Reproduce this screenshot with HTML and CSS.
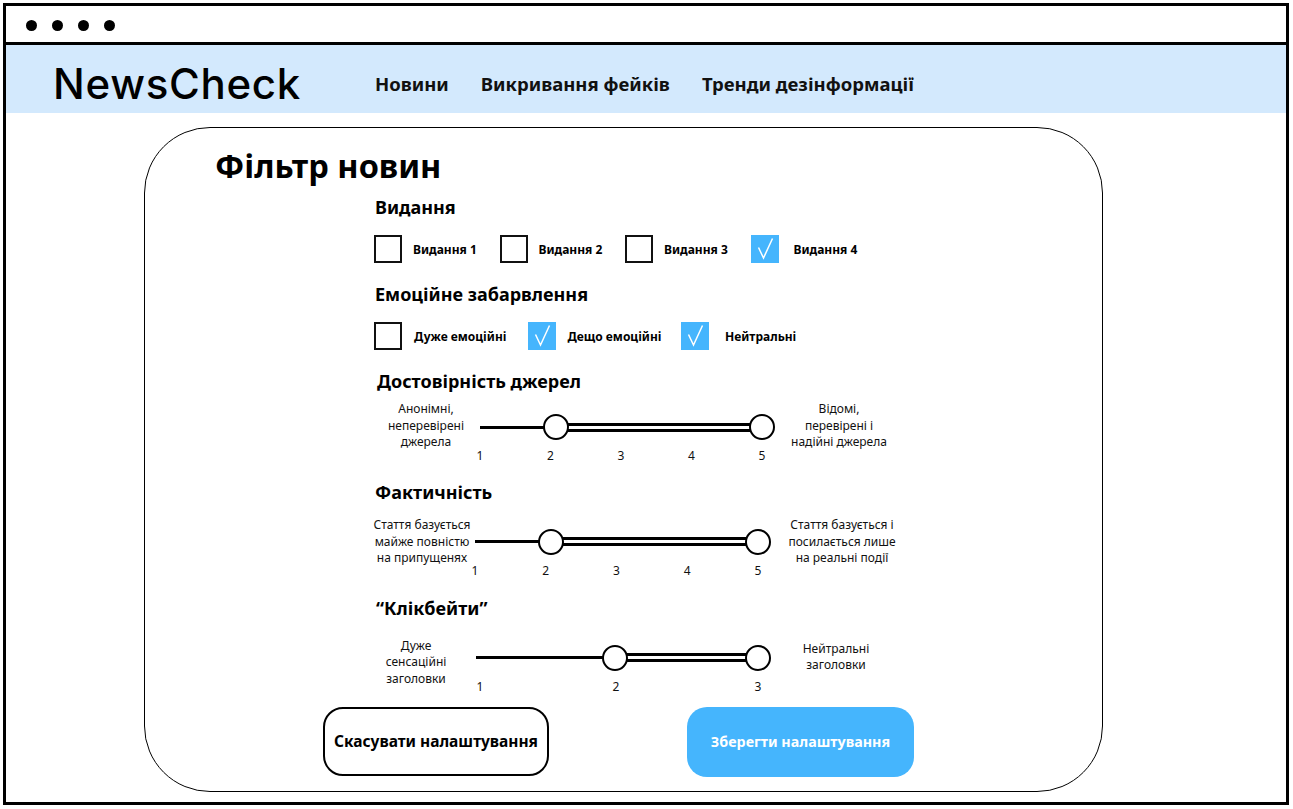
FILE: index.html
```html
<!DOCTYPE html>
<html lang="uk">
<head>
<meta charset="utf-8">
<title>NewsCheck — Фільтр новин</title>
<link rel="stylesheet" href="styles.css">
</head>
<body>
<div class="frame">
  <div class="topbar">
    <span class="dot"></span><span class="dot"></span><span class="dot"></span><span class="dot"></span>
  </div>
  <header class="nav">
    <div class="logo">NewsCheck</div>
    <nav class="links">
      <a href="#">Новини</a>
      <a href="#">Викривання фейків</a>
      <a href="#">Тренди дезінформації</a>
    </nav>
  </header>
  <main class="content">
    <section class="card">
      <h1 class="title">Фільтр новин</h1>
      <div class="form">
        <h2 class="h h-pub">Видання</h2>
        <div class="checks checks-pub">
          <label class="check"><span class="box"></span><span class="clabel">Видання 1</span></label>
          <label class="check"><span class="box"></span><span class="clabel">Видання 2</span></label>
          <label class="check"><span class="box"></span><span class="clabel">Видання 3</span></label>
          <label class="check"><span class="box on"><svg viewBox="0 0 28 28"><path d="M7.5 12.5 L12.5 23 L21.5 3.5"/></svg></span><span class="clabel gap4">Видання 4</span></label>
        </div>
        <h2 class="h h-emo">Емоційне забарвлення</h2>
        <div class="checks checks-emo">
          <label class="check"><span class="box"></span><span class="clabel">Дуже емоційні</span></label>
          <label class="check"><span class="box on"><svg viewBox="0 0 28 28"><path d="M7.5 12.5 L12.5 23 L21.5 3.5"/></svg></span><span class="clabel">Дещо емоційні</span></label>
          <label class="check"><span class="box on"><svg viewBox="0 0 28 28"><path d="M7.5 12.5 L12.5 23 L21.5 3.5"/></svg></span><span class="clabel gap3">Нейтральні</span></label>
        </div>

        <h2 class="h h-src">Достовірність джерел</h2>
        <div class="slider s1">
          <div class="side left">Анонімні,<br>неперевірені<br>джерела</div>
          <div class="trackcol">
            <div class="rail">
              <div class="line" style="width:76px"></div>
              <div class="range" style="left:76px;width:206px"></div>
              <span class="thumb" style="left:76px"></span>
              <span class="thumb" style="left:282px"></span>
            </div>
            <div class="ticks"><span>1</span><span>2</span><span>3</span><span>4</span><span>5</span></div>
          </div>
          <div class="side right">Відомі,<br>перевірені і<br>надійні джерела</div>
        </div>

        <h2 class="h h-fact">Фактичність</h2>
        <div class="slider s2">
          <div class="side left">Стаття базується<br>майже повністю<br>на припущенях</div>
          <div class="trackcol">
            <div class="rail">
              <div class="line" style="width:76px"></div>
              <div class="range" style="left:76px;width:207px"></div>
              <span class="thumb" style="left:76px"></span>
              <span class="thumb" style="left:283px"></span>
            </div>
            <div class="ticks"><span>1</span><span>2</span><span>3</span><span>4</span><span>5</span></div>
          </div>
          <div class="side right">Стаття базується і<br>посилається лише<br>на реальні події</div>
        </div>

        <h2 class="h h-click">“Клікбейти”</h2>
        <div class="slider s3">
          <div class="side left">Дуже<br>сенсаційні<br>заголовки</div>
          <div class="trackcol">
            <div class="rail">
              <div class="line" style="width:139px"></div>
              <div class="range" style="left:139px;width:143px"></div>
              <span class="thumb" style="left:139px"></span>
              <span class="thumb" style="left:282px"></span>
            </div>
            <div class="ticks t3"><span>1</span><span>2</span><span>3</span></div>
          </div>
          <div class="side right">Нейтральні<br>заголовки</div>
        </div>
      </div>
      <div class="buttons">
        <button class="btn cancel">Скасувати налаштування</button>
        <button class="btn save">Зберегти налаштування</button>
      </div>
    </section>
  </main>
</div>
</body>
</html>
```
FILE: styles.css
```css
* { box-sizing: border-box; }
html, body { margin: 0; padding: 0; background: #fff; }
body {
  font-family: "Noto Sans", "Open Sans", sans-serif;
  color: #000;
  padding: 3px 0 0 3px;
}
.frame {
  width: 1286px;
  height: 802px;
  border: 3px solid #000;
  background: #fff;
}
.topbar {
  height: 39px;
  border-bottom: 3px solid #000;
  display: flex;
  align-items: center;
  gap: 15px;
  padding-left: 20px;
  padding-top: 2px;
}
.dot {
  width: 11px;
  height: 11px;
  border-radius: 50%;
  background: #000;
}
.nav {
  height: 68px;
  background: #d3e9fd;
  display: flex;
  align-items: center;
  padding-top: 8px;
}
.logo {
  font-family: "Inter", sans-serif;
  font-weight: 500;
  font-size: 42px;
  letter-spacing: 0.7px;
  margin-left: 47px;
  width: 322px;
}
.links {
  display: flex;
  gap: 32px;
}
.links a {
  color: #111;
  text-decoration: none;
  font-weight: 700;
  font-size: 18.5px;
}
.content {
  padding-top: 14px;
  padding-left: 138px;
}
.card {
  width: 959px;
  height: 665px;
  border: 1.5px solid #000;
  border-radius: 66px;
  padding-top: 18px;
}
.title {
  margin: 0 0 0 70px;
  font-size: 32.5px;
  line-height: 40px;
  font-weight: 700;
}
.form {
  margin-left: 230px;
}
.h {
  margin: 0;
  font-size: 18px;
  line-height: 24px;
  font-weight: 700;
}
.h-pub { margin-top: 9px; }
.h-emo { margin-top: 19px; }
.h-src { margin-top: 19px; margin-left: 2px; }
.h-fact { margin-top: 16px; }
.h-click { margin-top: 17px; margin-left: 1px; }

.checks {
  display: flex;
  margin-top: 16px;
  margin-left: -1px;
}
.check {
  display: flex;
  align-items: center;
  font-size: 12px;
  font-weight: 700;
}
.checks-pub .check { width: 125.5px; }
.checks-emo .check { width: 153.5px; }
.box {
  width: 28px;
  height: 28px;
  border: 2px solid #111;
  flex: none;
  display: block;
}
.box.on {
  border: none;
  background: #45b5fd;
}
.box svg {
  display: block;
  width: 28px;
  height: 28px;
}
.box path {
  fill: none;
  stroke: #fff;
  stroke-width: 1.5;
}
.clabel { margin-left: 11px; }
.checks-emo .clabel { margin-left: 12px; }
.clabel.gap4 { margin-left: 15px; }
.checks-emo .clabel.gap3 { margin-left: 16px; }

.slider {
  display: flex;
  align-items: flex-start;
  font-size: 12px;
  line-height: 16.5px;
  color: #111;
}
.side {
  width: 100px;
  text-align: center;
  flex: none;
}
.trackcol { flex: none; }
.rail {
  position: relative;
  height: 26px;
}
.line {
  position: absolute;
  left: 0;
  top: 11.5px;
  height: 3px;
  background: #000;
}
.range {
  position: absolute;
  top: 8.5px;
  height: 9px;
  border-top: 3px solid #000;
  border-bottom: 3px solid #000;
  background: #fff;
}
.thumb {
  position: absolute;
  top: 0;
  width: 26px;
  height: 26px;
  margin-left: -13px;
  border: 2px solid #000;
  border-radius: 50%;
  background: #fff;
}
.ticks {
  display: flex;
  justify-content: space-between;
  margin-top: 8px;
  line-height: 16px;
}
.ticks span {
  width: 0;
  display: flex;
  justify-content: center;
}

.s1 { margin-top: 8px; margin-left: 1px; }
.s1 .trackcol { width: 282px; margin-left: 4px; margin-top: 13px; }
.s1 .right { margin-left: 22px; width: 110px; }

.s2 { margin-top: 13px; margin-left: -3px; }
.s2 .trackcol { width: 283px; margin-left: 3px; margin-top: 11.5px; }
.s2 .right { margin-left: 28px; width: 112px; }

.s3 { margin-top: 18px; margin-left: -9px; }
.s3 .trackcol { width: 282px; margin-left: 10px; margin-top: 7px; }
.s3 .ticks { padding-left: 4px; }
.s3 .ticks span:nth-child(2) { margin-left: -6px; }
.s3 .right { margin-left: 28px; margin-top: 3px; }

.buttons {
  display: flex;
  gap: 138px;
  margin-top: 12px;
  margin-left: 178px;
}
.btn {
  width: 226px;
  height: 69px;
  border-radius: 20px;
  font-family: "Noto Sans", "Open Sans", sans-serif;
  font-weight: 700;
  font-size: 15.5px;
  cursor: pointer;
}
.cancel {
  background: #fff;
  border: 2px solid #000;
  color: #000;
}
.save {
  width: 227px;
  height: 70px;
  background: #45b5fd;
  border: none;
  color: #fff;
  font-size: 14.3px;
}
```
